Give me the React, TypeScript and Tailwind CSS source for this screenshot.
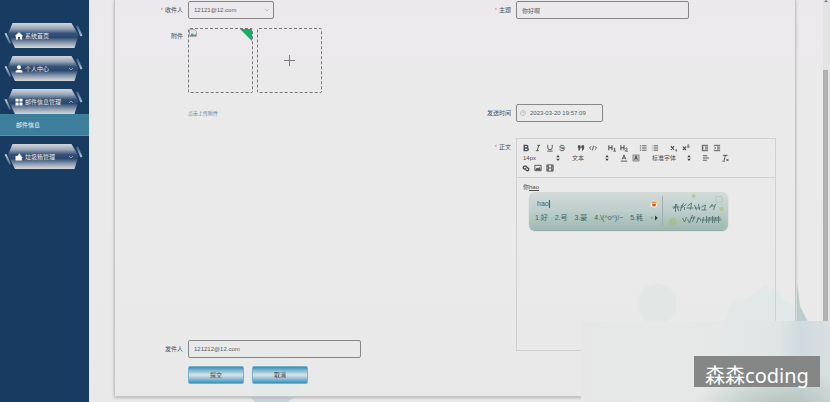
import { useState, type ReactNode } from "react";

const sans = "font-['Liberation_Sans','Noto_Sans_CJK_SC',sans-serif]";

function HexBackdrop() {
  return (
    <svg className="absolute inset-0 h-full w-full" viewBox="0 0 89 25" preserveAspectRatio="none" aria-hidden="true">
      <defs>
        <linearGradient id="steel" x1="0" y1="0" x2="0" y2="1">
          <stop offset="0" stopColor="#d3d6da" />
          <stop offset="0.22" stopColor="#9aa7b8" />
          <stop offset="0.42" stopColor="#34527a" />
          <stop offset="0.58" stopColor="#2b496f" />
          <stop offset="0.8" stopColor="#8f9db1" />
          <stop offset="1" stopColor="#d6d9dd" />
        </linearGradient>
        <linearGradient id="slash" x1="0" y1="0" x2="0" y2="1">
          <stop offset="0" stopColor="#3f6287" />
          <stop offset="1" stopColor="#b4c6d8" />
        </linearGradient>
        <linearGradient id="slashLeft" x1="0" y1="0" x2="0" y2="1">
          <stop offset="0" stopColor="#c3d0dd" />
          <stop offset="1" stopColor="#44678c" />
        </linearGradient>
      </defs>
      <path d="M12.5 0H71.5L78.500 12L74.500 25H15L8 11Z" fill="url(#steel)" />
      <path d="M4.500 10.500L6.500 10L11 20L9.500 21Z" fill="url(#slashLeft)" />
      <path d="M76 3L78 2.500L82.500 12.500L80.500 13.500Z" fill="url(#slash)" />
    </svg>
  );
}

function Chevron({ up = false, className = "" }: { up?: boolean; className?: string }) {
  return (
    <svg className={`h-1 w-1.5 ${className}`} viewBox="0 0 6 4" fill="none" stroke="currentColor" strokeWidth="0.8" aria-hidden="true">
      <path d={up ? "M1 3L3 1L5 3" : "M1 1L3 3L5 1"} />
    </svg>
  );
}

const navIcons: Record<string, ReactNode> = {
  home: <path d="M4 0.300L7.900 3.800V4.300H7.100V7.600H5V5H3V7.600H0.900V4.300H0.100V3.800Z" />,
  user: (
    <>
      <circle cx="4" cy="2.300" r="2" />
      <path d="M0.600 7.600V6.500Q0.600 4.800 4 4.800Q7.400 4.800 7.400 6.500V7.600Z" />
    </>
  ),
  grid: <path d="M0.500 0.700H3.600V3.600H0.500ZM4.400 0.700H7.500V3.600H4.400ZM0.500 4.400H3.600V7.400H0.500ZM4.400 4.400H7.500V7.400H4.400Z" />,
  bin: <path d="M0.500 3H2.500L4.200 0.500L5.600 1.500L5.200 2.500H6.500V4L8 4.600L6.800 5.400V7.500H0.500Z" />,
};

function NavItem({ icon, label, arrow }: { icon: string; label: string; arrow?: "up" | "down" }) {
  return (
    <button type="button" className="relative block h-[25px] w-full text-left">
      <HexBackdrop />
      <span className="relative flex items-center pl-[15px] pr-[15px] text-[6px] leading-[8px] text-white">
        <svg className="mr-0.5 h-2 w-2 shrink-0" viewBox="0 0 8 8" fill="#fff" aria-hidden="true">
          {navIcons[icon]}
        </svg>
        <span className="flex-1 whitespace-nowrap opacity-90">{label}</span>
        {arrow && <Chevron up={arrow === "up"} className="text-[#a9b8c9]" />}
      </span>
    </button>
  );
}

function Sidebar() {
  return (
    <aside className="w-[89px] shrink-0 bg-[#183c61] pt-[23px]">
      <nav className="flex flex-col">
        <NavItem icon="home" label="系统首页" />
        <div className="h-2" />
        <NavItem icon="user" label="个人中心" arrow="down" />
        <div className="h-2" />
        <NavItem icon="grid" label="邮件信息管理" arrow="up" />
        <a href="#mail" className="flex h-[22px] items-center border-b border-[#5a94ab] bg-[#3d7e9c] pl-4 text-[6px] leading-[8px] text-[#eef4f7]">
          邮件信息
        </a>
        <div className="h-2" />
        <NavItem icon="bin" label="垃圾箱管理" arrow="down" />
      </nav>
    </aside>
  );
}

function Field({ label, id, required, children }: { label: string; id: string; required?: boolean; children: ReactNode }) {
  return (
    <div className="flex gap-[5px]">
      <label htmlFor={id} className="w-14 shrink-0 whitespace-nowrap pt-[5px] text-right text-[6px] leading-[8px] text-[#4c4c4e]">
        {required && <span className="mr-0.5 text-[#ee6a72]">*</span>}
        {label}
      </label>
      {children}
    </div>
  );
}

const box = "h-[18px] rounded-xs border border-[#868688] bg-transparent text-[6px] leading-[8px] text-[#5a5a5c] outline-none";

function Tool({ label, children }: { label: string; children: ReactNode }) {
  return (
    <button type="button" aria-label={label} className="flex h-2.5 w-3 items-center justify-center text-[#4a4a4c]">
      <svg className="h-2 w-2" viewBox="0 0 18 18" fill="none" stroke="currentColor" strokeWidth="2" aria-hidden="true">
        {children}
      </svg>
    </button>
  );
}

function ToolSelect({ label, value, wide }: { label: string; value: string; wide?: boolean }) {
  return (
    <span className={`relative flex h-2.5 items-center ${wide ? "w-11" : "w-[42px]"}`}>
      <select aria-label={label} className="w-full appearance-none bg-transparent pl-[3px] text-[6px] leading-[8px] text-[#4c4c4e] outline-none">
        <option>{value}</option>
      </select>
      <svg className="pointer-events-none absolute right-0.5 h-1.5 w-1" viewBox="0 0 4 6" fill="#3c3c3e" aria-hidden="true">
        <path d="M2 0L3.700 2.300H0.300ZM2 6L0.300 3.700H3.700Z" />
      </svg>
    </span>
  );
}

function Toolbar() {
  return (
    <div className="flex flex-col border-b border-[#d0d0d2] px-[3px] pb-1 pt-1">
      <div className="flex gap-[7px]">
        <div className="flex">
          <Tool label="粗体"><path strokeWidth="3" d="M5 3H10A3 3 0 0 1 10 9H5ZM5 9H11A3 3 0 0 1 11 15H5Z" /></Tool>
          <Tool label="斜体"><path d="M7 3H14M4 15H11M11 3L7 15" /></Tool>
          <Tool label="下划线"><path d="M4 2V8A5 5 0 0 0 14 8V2M3 16H15" /></Tool>
          <Tool label="删除线"><path d="M14 5Q12 3 9 3Q4 3 4 7Q4 9 9 9Q14 9 14 12Q14 15 9 15Q5 15 4 12M8 9H16" /></Tool>
        </div>
        <div className="flex">
          <Tool label="引用"><path fill="currentColor" d="M3 4H7V9L5 14H4L5 9H3ZM11 4H15V9L13 14H12L13 9H11Z" /></Tool>
          <Tool label="代码"><path d="M5 5L1 9L5 13M13 5L17 9L13 13M10 4L8 14" /></Tool>
        </div>
        <div className="flex">
          <Tool label="标题一"><path strokeWidth="2.500" d="M2 3V14M9 3V14M2 8.500H9" /><path d="M13 10L15 9V16M12 16H18" /></Tool>
          <Tool label="标题二"><path strokeWidth="2.500" d="M2 3V14M9 3V14M2 8.500H9" /><path d="M12 10Q14 8 16 10Q17 11 12 16H18" /></Tool>
        </div>
        <div className="flex">
          <Tool label="有序列表"><path d="M7 4H17M7 9H17M7 14H17M2 4H5M2 9H5M2 14H5" /></Tool>
          <Tool label="无序列表"><path d="M6 4H16M6 9H16M6 14H16M2 4H3M2 9H3M2 14H3" /></Tool>
        </div>
        <div className="flex">
          <Tool label="下标"><path strokeWidth="2.500" d="M2 5L9 13M9 5L2 13M14 12V17" /></Tool>
          <Tool label="上标"><path strokeWidth="2.500" d="M2 6L9 14M9 6L2 14" /><path d="M12 3Q14 0 16 3L12 7H17" /></Tool>
        </div>
        <div className="flex">
          <Tool label="减少缩进"><path d="M2 3H16M9 7H16M9 11H16M2 15H16M6 6L3 9L6 12M3 3V15" /></Tool>
          <Tool label="增加缩进"><path d="M2 3H16M9 7H16M9 11H16M2 15H16M3 6L6 9L3 12" /></Tool>
        </div>
      </div>
      <div className="flex gap-[7px]">
        <ToolSelect label="字号" value="14px" />
        <ToolSelect label="段落" value="文本" />
        <div className="flex">
          <Tool label="字体颜色"><path d="M5 12L9 2L13 12M6 9H12M2 16H16" /></Tool>
          <Tool label="背景颜色"><path strokeWidth="1" d="M2 2H16V16H2Z" fill="#bcbcbe" /><path d="M6 13L9 4L12 13M7 10H11" /></Tool>
        </div>
        <ToolSelect label="字体" value="标准字体" wide />
        <Tool label="对齐"><path d="M2 4H12M2 9H16M2 14H11" /></Tool>
        <Tool label="清除格式"><path d="M4 3H15M10 3L7 14M3 16H9M12 11L17 16M17 11L12 16" /></Tool>
      </div>
      <div className="flex">
        <Tool label="链接"><path strokeWidth="3" d="M9 9L7 11A3 3 0 0 1 3 7L5 5A3 3 0 0 1 9 5L13 9A3 3 0 0 1 11 15L8 13" /></Tool>
        <Tool label="图片"><path d="M2 3H16V15H2Z" /><path fill="currentColor" d="M4 13L7 9L9 11L12 8L14 13Z" /></Tool>
        <Tool label="视频"><path d="M2 2H16V16H2ZM5 2V16M13 2V16M5 9H13M2 6H5M2 12H5M13 6H16M13 12H16" /></Tool>
      </div>
    </div>
  );
}

const candidates = ["1.好", "2.号", "3.豪", "4.\\(^o^)/~", "5.耗"];

function InputMethod() {
  return (
    <div className="absolute left-3 top-[14px] flex h-[38px] w-[199px] rounded-md bg-linear-to-b from-[#d3dbd9] via-[#bdcecb] to-[#9fb8b2] text-[#3f6362] shadow-[0_1px_1px_#8fa6a1]">
      <div className="my-1 flex w-[134px] flex-col justify-between border-r border-[#9fb0ae] pb-1 pl-1.5 pr-1 pt-1">
        <div className="flex items-center justify-between pl-0.5 text-[7px] leading-[8px]">
          <span className="border-r border-[#456]">hao</span>
          <svg className="h-2 w-2" viewBox="0 0 8 8" aria-hidden="true">
            <circle cx="4" cy="4" r="3.500" fill="#f5ece2" />
            <path d="M0.800 2.600Q4 -0.500 7.200 2.600L6 3.400H2Z" fill="#f1a33c" />
            <path d="M2 4H6Q6 6.500 4 6.500Q2 6.500 2 4Z" fill="#d55731" />
          </svg>
        </div>
        <div className="flex items-center justify-between whitespace-nowrap text-[7px] leading-[8px]">
          {candidates.map((c) => (
            <span key={c}>{c}</span>
          ))}
          <svg className="h-1.5 w-2" viewBox="0 0 8 6" aria-hidden="true">
            <path d="M2.500 1L0.500 3L2.500 5Z" fill="#86a09d" />
            <path d="M5 0.500L7.800 3L5 5.500Z" fill="#24413f" />
          </svg>
        </div>
      </div>
      <svg className="h-[38px] flex-1" viewBox="0 0 64 38" fill="none" stroke="#55736f" strokeWidth="0.900" aria-hidden="true">
        <circle cx="9" cy="30" r="4" fill="#a9bd93" stroke="none" />
        <circle cx="30" cy="4" r="2" fill="#b9c69d" stroke="none" />
        <circle cx="58" cy="17" r="2.300" fill="#b5c49c" stroke="none" />
        <path d="M52 5L58 4L59 9L53 11Z" stroke="#b4c3bf" />
        <path d="M10 17L13 12L15 19M9 15H16M12 12V20M18 13L17 19M20 11L18 16L23 12M21 15V18M24 14L28 11L27 18M23 16H30M31 13L33 18M31 16H37M35 12L36 18M38 15L42 13L41 18M38 18H43M46 16L49 12M52 12L50 18M47 14H51" />
        <path d="M19 26L21 30L23 25M24 27L26 31L29 23M27 26H32M31 24L29 30M35 25L33 31M34 28Q37 24 37 29M40 25L39 31M38 28H58M43 24V31M46 25L45 31M49 24V31M52 25L51 31M55 24V31M44 26H57" />
      </svg>
    </div>
  );
}

function Attachments() {
  return (
    <div className="pt-px">
      <div className="flex gap-1">
        <div className="relative h-[65px] w-[65px] overflow-hidden rounded-xs border border-dashed border-[#77777a]">
          <svg className="h-2 w-2" viewBox="0 0 8 8" aria-hidden="true">
            <path d="M0.500 0.500H5.500L7.500 2.500V7.500H0.500Z" fill="#dfe6ef" stroke="#99999c" strokeWidth="0.800" />
            <path d="M1 7L3 4L5 6L7 5V7Z" fill="#5d9a55" />
          </svg>
          <svg className="absolute right-0 top-0 h-3 w-3" viewBox="0 0 12 12" aria-hidden="true">
            <path d="M0 0H12V12Z" fill="#17ab68" />
          </svg>
        </div>
        <button type="button" id="upload" aria-label="上传附件" className="flex h-[65px] w-[65px] items-center justify-center rounded-xs border border-dashed border-[#77777a]">
          <svg className="h-3 w-3" viewBox="0 0 12 12" stroke="#7b7b7d" strokeWidth="1" aria-hidden="true">
            <path d="M5.500 0V11M0 5.500H11" />
          </svg>
        </button>
      </div>
      <p className="mt-4 text-[5px] leading-[8px] text-[#6f7d8b]">点击上传附件</p>
    </div>
  );
}

const action =
  "h-[18px] w-14 rounded-xs border border-[#74b0c8] bg-linear-to-b from-[#2f92ba] via-[#d9e5e9] to-[#2f92ba] text-[6px] leading-[8px] text-[#37474f]";

function MailForm() {
  const [subject, setSubject] = useState("你好啊");
  const [time, setTime] = useState("2023-03-20 19:57:09");
  const [sender, setSender] = useState("121212@12.com");
  return (
    <form className="relative rounded-b-xs border-x border-b border-[#c6c6c8] px-3 pb-3 pt-px shadow-[0_1px_3px_#b5b5b7]" onSubmit={(e) => e.preventDefault()}>
      <div className="grid grid-cols-2">
        <div className="flex flex-col">
          <Field label="收件人" id="to" required>
            <span className="relative flex items-center">
              <select id="to" className={`${box} w-[86px] appearance-none pl-[5px]`}>
                <option>12121@12.com</option>
              </select>
              <Chevron className="pointer-events-none absolute right-1 text-[#b5b5b7]" />
            </span>
          </Field>
          <div className="mt-2">
            <Field label="附件" id="upload">
              <Attachments />
            </Field>
          </div>
          <div className="mt-auto">
            <Field label="发件人" id="from">
              <input id="from" value={sender} onChange={(e) => setSender(e.target.value)} className={`${box} w-[173px] pl-[5px]`} />
            </Field>
          </div>
        </div>
        <div className="flex flex-col">
          <Field label="主题" id="subject" required>
            <input id="subject" value={subject} onChange={(e) => setSubject(e.target.value)} className={`${box} w-[173px] pl-[5px]`} />
          </Field>
          <div className="mt-[85px]">
            <Field label="发送时间" id="time">
              <span className="relative flex items-center">
                <svg className="absolute left-1 h-1.5 w-1.5" viewBox="0 0 6 6" fill="none" stroke="#b0b0b3" strokeWidth="0.700" aria-hidden="true">
                  <circle cx="3" cy="3" r="2.500" />
                  <path d="M3 1.500V3H4.300" />
                </svg>
                <input id="time" value={time} onChange={(e) => setTime(e.target.value)} className={`${box} w-[87px] pl-[13px]`} />
              </span>
            </Field>
          </div>
          <div className="mb-[7px] mt-4 pr-[7px]">
            <Field label="正文" id="body" required>
              <div className="min-w-0 flex-1 border border-[#d0d0d2]">
                <Toolbar />
                <div className="relative h-[172px]">
                  <div id="body" role="textbox" contentEditable suppressContentEditableWarning className="h-full px-1.5 pt-[5px] text-[6px] leading-[8px] text-[#4c4c4e] outline-none">
                    你<u>hao</u>
                  </div>
                  <InputMethod />
                </div>
              </div>
            </Field>
          </div>
        </div>
      </div>
      <div className="ml-[61px] mt-2 flex gap-2">
        <button type="submit" className={action}>提交</button>
        <button type="button" className={action}>取消</button>
      </div>
    </form>
  );
}

function Scenery() {
  return (
    <svg className="absolute bottom-0 right-0 h-[130px] w-[580px]" viewBox="0 0 580 130" aria-hidden="true">
      <circle cx="25" cy="109" r="26" fill="#e5e9e9" />
      <path d="M0 125H44L38 130H5Z" fill="#c5d4db" />
      <circle cx="407" cy="32" r="20" fill="#e2e7e6" />
      <path d="M470 60L482 30L500 25L515 13L528 20L535 30L546 34V60Z" fill="#e2e8e7" />
      <path d="M547 10L550 34L558 50H547Z" fill="#bccdd0" />
    </svg>
  );
}

export default function App() {
  return (
    <div className={`relative flex h-screen overflow-hidden bg-linear-to-b from-[#ece9ec] via-[#eaeaea] via-30% to-[#e9e9e9] ${sans}`}>
      <Scenery />
      <Sidebar />
      <main className="min-w-0 flex-1 pl-[25px] pr-[27px]">
        <MailForm />
      </main>
      <div className="flex w-[7px] shrink-0 flex-col bg-[#e3e3e4] pr-0.5">
        <div className="h-[70px]">
          <svg className="h-1 w-1.5" viewBox="0 0 6 4" fill="#717173" aria-hidden="true"><path d="M1 2L3 0L5 2Z" /></svg>
        </div>
        <div className="flex-1 bg-[#b1b1b2]" />
      </div>
      <div className="absolute bottom-0 right-0 h-[81px] w-[249px] bg-[radial-gradient(ellipse_at_80%_110%,#afbfb6_0%,transparent_32%),linear-gradient(90deg,#e7e7e7_0%,#e6e8e8_55%,#dfe4e5_80%,#d0d9df_88%,#d9dfe1_100%)]">
        <p className="absolute bottom-[15px] right-[10px] flex h-[31px] w-[126px] items-center justify-center whitespace-nowrap bg-[#858787] pt-2 font-['Noto_Sans','Noto_Sans_CJK_SC',sans-serif] text-xl leading-6 text-white">
          森森coding
        </p>
      </div>
    </div>
  );
}
